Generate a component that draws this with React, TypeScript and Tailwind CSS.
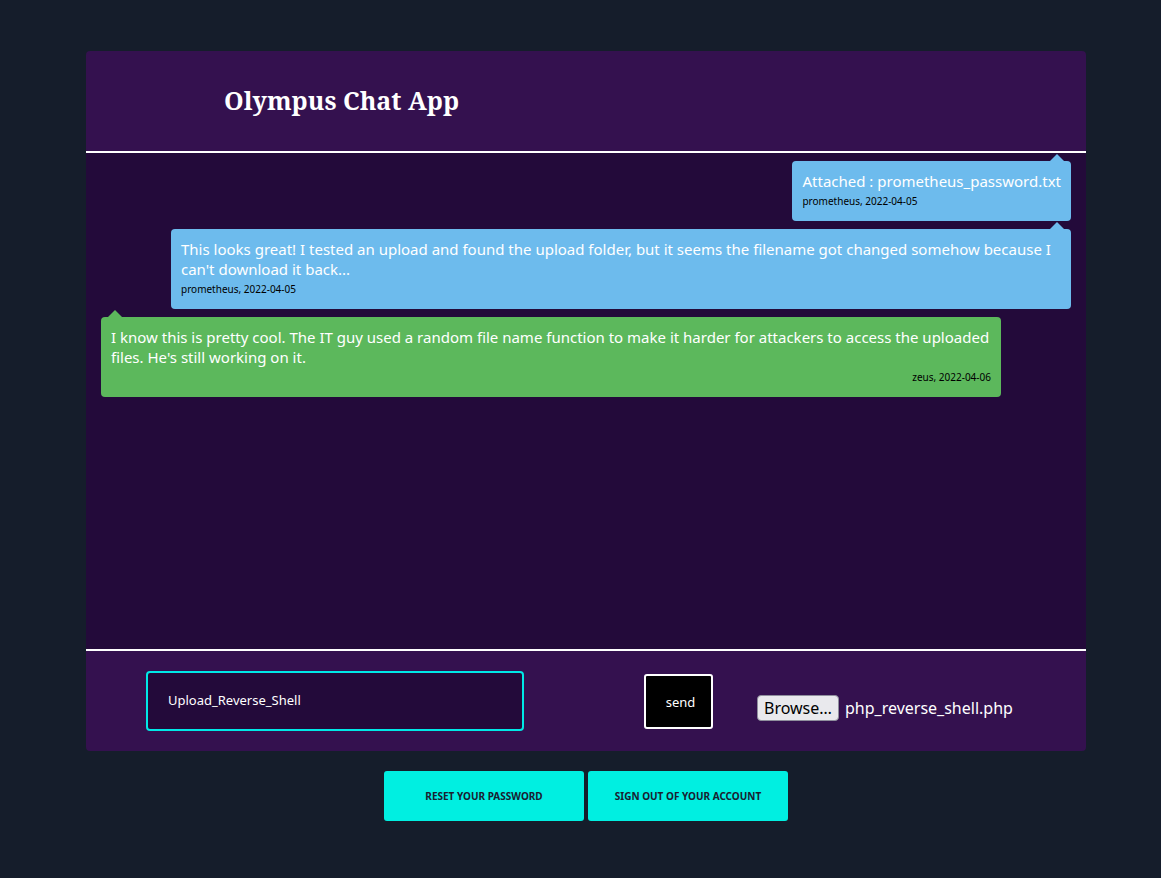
import React from "react";

export default function App() {
  const sans = { fontFamily: '"Noto Sans", "Open Sans", sans-serif' };
  return (
    <div className="min-h-[878px] w-full bg-[#151d2b] pt-[51px]" style={sans}>
      <div className="ml-[86px] w-[1000px] overflow-hidden rounded-[4px] bg-[#34114f]">
        <div className="flex h-[100px] items-center pl-[138px]">
          <h1
            className="text-[25px] font-bold text-white"
            style={{ fontFamily: '"Noto Serif", "DejaVu Serif", "Liberation Serif", serif' }}
          >
            Olympus Chat App
          </h1>
        </div>
        <div className="h-[2px] bg-white" />
        <div className="flex h-[496px] flex-col bg-[#230a3a] px-[15px] pt-[8px]">
          <div className="relative self-end rounded-[4px] bg-[#6dbbed] px-[10px] pt-[10px] pb-[10px] text-white">
            <div className="absolute right-[7px] top-[-7px] h-0 w-0 border-x-[7px] border-b-[7px] border-x-transparent border-b-[#6dbbed]" />
            <div className="text-[15px] leading-[20px]">Attached : prometheus_password.txt</div>
            <div className="text-[10px] leading-[20px] text-black">prometheus, 2022-04-05</div>
          </div>
          <div className="relative mt-[8px] w-[900px] self-end rounded-[4px] bg-[#6dbbed] px-[10px] pt-[10px] pb-[10px] text-white">
            <div className="absolute right-[7px] top-[-7px] h-0 w-0 border-x-[7px] border-b-[7px] border-x-transparent border-b-[#6dbbed]" />
            <div className="text-[15px] leading-[20px]">
              This looks great! I tested an upload and found the upload folder, but it seems the filename got changed somehow because I can't download it back...
            </div>
            <div className="text-[10px] leading-[20px] text-black">prometheus, 2022-04-05</div>
          </div>
          <div className="relative mt-[8px] w-[900px] self-start rounded-[4px] bg-[#5cb85c] px-[10px] pt-[10px] pb-[10px] text-white">
            <div className="absolute left-[7px] top-[-7px] h-0 w-0 border-x-[7px] border-b-[7px] border-x-transparent border-b-[#5cb85c]" />
            <div className="text-[15px] leading-[20px]">
              I know this is pretty cool. The IT guy used a random file name function to make it harder for attackers to access the uploaded files. He's still working on it.
            </div>
            <div className="text-right text-[10px] leading-[20px] text-black">zeus, 2022-04-06</div>
          </div>
        </div>
        <div className="h-[2px] bg-white" />
        <div className="flex h-[100px] items-start">
          <div className="ml-[60px] mt-[20px] flex h-[60px] w-[378px] items-center rounded-[4px] border-2 border-[#00e8e6] bg-[#230a3a] pl-[20px] text-[13px] text-white">
            Upload_Reverse_Shell
          </div>
          <div className="ml-[120px] mt-[23px] flex h-[55px] w-[69px] items-center justify-center rounded-[3px] border-2 border-white bg-black pt-[3px] pl-[4px] text-[13px] text-white">
            send
          </div>
          <div className="ml-[44px] mt-[44px] flex items-center text-[16px] text-white">
            <div className="flex h-[26px] items-center rounded-[4px] border border-[#8f8f9d] bg-[#e9e9ed] px-[6px] text-black">
              Browse…
            </div>
            <span className="ml-[6px]">php_reverse_shell.php</span>
          </div>
        </div>
      </div>
      <div className="ml-[384px] mt-[20px] flex gap-[4px]">
        <div className="flex h-[50px] w-[200px] items-center justify-center rounded-[3px] bg-[#00efe1] text-[10px] font-bold text-[#1a2030]">
          RESET YOUR PASSWORD
        </div>
        <div className="flex h-[50px] w-[200px] items-center justify-center rounded-[3px] bg-[#00efe1] text-[10px] font-bold text-[#1a2030]">
          SIGN OUT OF YOUR ACCOUNT
        </div>
      </div>
    </div>
  );
}
